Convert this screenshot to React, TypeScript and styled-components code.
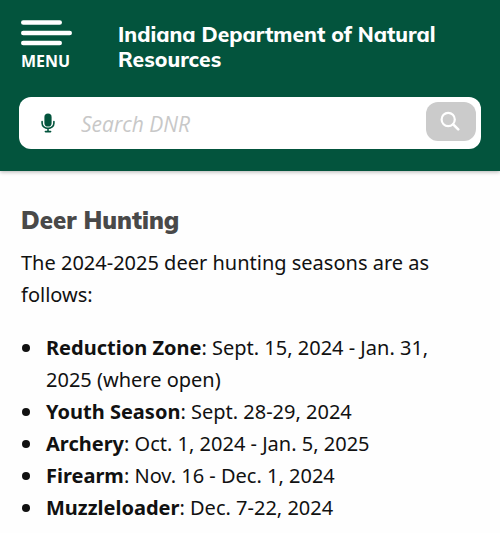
import React from "react";
import styled, { createGlobalStyle } from "styled-components";

const Global = createGlobalStyle`
  * { box-sizing: border-box; }
  body { margin: 0; background: #fefefe; color: #111; font-family: "Noto Sans", "Open Sans", sans-serif; }
`;

const Header = styled.header`
  background: #03543d;
  padding: 18px 19px 22px;
  box-shadow: 0 1px 4px rgba(0, 0, 0, 0.3);
`;
const TopBar = styled.div`
  display: flex;
  align-items: flex-start;
  gap: 46px;
`;
const MenuButton = styled.button`
  display: flex;
  flex-direction: column;
  align-items: flex-start;
  gap: 4px;
  padding: 0 0 0 2px;
  border: 0;
  background: none;
  color: #fff;
  font: 700 16px/20px "Open Sans", sans-serif;
  cursor: pointer;
`;
const SiteName = styled.a`
  flex: 1;
  padding-top: 4px;
  color: #fff;
  font: 800 21px/25px Mulish, Nunito, Lato, sans-serif;
  text-decoration: none;
`;
const SearchForm = styled.form`
  display: flex;
  align-items: center;
  height: 52px;
  margin-top: 25px;
  padding: 0 5px 0 4px;
  border-radius: 12px;
  background: #fff;
`;
const VoiceButton = styled.button`
  display: flex;
  justify-content: center;
  width: 50px;
  padding: 0;
  border: 0;
  background: none;
  cursor: pointer;
`;
const SearchInput = styled.input`
  flex: 1;
  min-width: 0;
  padding: 2px 8px 0;
  border: 0;
  outline: 0;
  background: none;
  font: italic 400 21px/30px "Open Sans", sans-serif;
  &::placeholder { color: #c8c8c8; opacity: 1; }
`;
const SearchButton = styled.button`
  display: flex;
  align-items: center;
  justify-content: center;
  width: 50px;
  height: 39px;
  margin-bottom: 3px;
  padding: 0 2px 2px 0;
  border: 0;
  border-radius: 12px;
  background: #cbcbcb;
  cursor: pointer;
`;
const Content = styled.main`
  padding: 34px 21px 9px;
  font-size: 20px;
  line-height: 32px;
`;
const Heading = styled.h1`
  margin: 0 0 12px;
  color: #494949;
  font: 900 24px/30px Mulish, Nunito, Lato, sans-serif;
`;
const Intro = styled.p`
  margin: 0 0 21px;
`;
const SeasonList = styled.ul`
  margin: 0;
  padding: 0;
  list-style: none;
`;
const Season = styled.li`
  display: grid;
  grid-template-columns: 25px 1fr;
  &::before {
    content: "";
    width: 8px;
    height: 8px;
    margin: 12px 0 0 1px;
    border-radius: 50%;
    background: #111;
  }
`;

const seasons = [
  ["Reduction Zone", "Sept. 15, 2024 - Jan. 31, 2025 (where open)"],
  ["Youth Season", "Sept. 28-29, 2024"],
  ["Archery", "Oct. 1, 2024 - Jan. 5, 2025"],
  ["Firearm", "Nov. 16 - Dec. 1, 2024"],
  ["Muzzleloader", "Dec. 7-22, 2024"],
];

export default function App() {
  return (
    <>
      <Global />
      <Header>
        <TopBar>
          <MenuButton type="button">
            <svg width="51" height="29" viewBox="0 0 51 29" stroke="#fff" strokeWidth="4.6" strokeLinecap="round" aria-hidden="true">
              <path d="M2.3 4.5h36.4M2.3 15h46.4M2.3 25h36.4" />
            </svg>
            MENU
          </MenuButton>
          <SiteName href="#">Indiana Department of Natural Resources</SiteName>
        </TopBar>
        <SearchForm role="search" onSubmit={(e) => e.preventDefault()}>
          <VoiceButton type="button" aria-label="Search by voice">
            <svg width="14" height="20" viewBox="0 0 14 20" fill="none" stroke="#03543d" strokeLinecap="round" aria-hidden="true">
              <rect x="3.4" y="0.5" width="7.2" height="13" rx="3.6" fill="#03543d" stroke="none" />
              <path d="M1.1 8.5v1.7a5.9 5.2 0 0 0 11.8 0V8.5M7 15.4v3M4.4 18.6h5.2" strokeWidth="1.6" />
            </svg>
          </VoiceButton>
          <SearchInput type="search" aria-label="Search DNR" placeholder="Search DNR" />
          <SearchButton type="submit" aria-label="Search">
            <svg width="20" height="20" viewBox="0 0 20 20" fill="none" stroke="#fff" strokeWidth="2.2" strokeLinecap="round" aria-hidden="true">
              <circle cx="8.2" cy="8.5" r="6.6" />
              <path d="m13.2 13.4 5 5" strokeWidth="2.6" />
            </svg>
          </SearchButton>
        </SearchForm>
      </Header>
      <Content>
        <Heading>Deer Hunting</Heading>
        <Intro>The 2024-2025 deer hunting seasons are as follows:</Intro>
        <SeasonList>
          {seasons.map(([name, dates]) => (
            <Season key={name}>
              <div><strong>{name}</strong>: {dates}</div>
            </Season>
          ))}
        </SeasonList>
      </Content>
    </>
  );
}
